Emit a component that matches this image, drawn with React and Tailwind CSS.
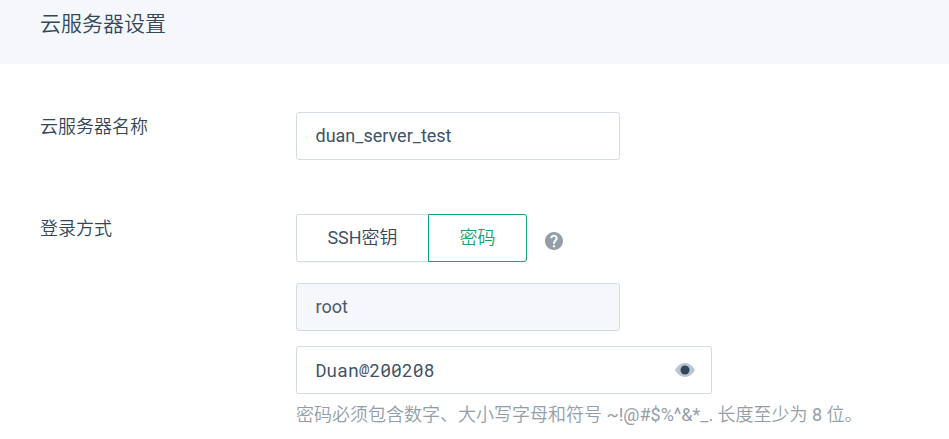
function HelpIcon() {
  return (
    <svg width="18" height="18" viewBox="2 2 20 20" aria-hidden="true" className="shrink-0 fill-[#939ea9]">
      <path d="M12 2C6.48 2 2 6.48 2 12s4.480 10 10 10 10-4.480 10-10S17.520 2 12 2zm1.200 17h-2.400v-2.300h2.400V19zm2.070-7.750-.9.920C13.600 12.900 13.200 13.500 13.200 15h-2.400v-.5c0-1.100.45-2.100 1.170-2.830l1.240-1.260c.37-.36.59-.86.59-1.410 0-1.100-.8-1.900-1.800-1.900s-1.900.8-1.900 1.900H7.900c0-2.210 1.890-4 4.100-4s4.100 1.790 4.100 4c0 .88-.26 1.680-.83 2.250z" />
    </svg>
  );
}

function EyeIcon() {
  return (
    <svg width="20" height="14" viewBox="0 0 20 14" aria-hidden="true" className="shrink-0">
      <path d="M0 7C2.300 3.200 5.600 0 10 0s7.700 3.200 10 7c-2.300 3.800-5.600 7-10 7S2.300 10.800 0 7z" fill="#b9c5d1" />
      <circle cx="10" cy="7" r="4.500" fill="#33475b" />
    </svg>
  );
}

function Row({ label, children }) {
  return (
    <div className="flex items-start pl-10">
      <div className="w-64 shrink-0 leading-[30px]">{label}</div>
      <div className="flex flex-col items-start">{children}</div>
    </div>
  );
}

export default function App() {
  return (
    <main className="h-[439px] w-full overflow-hidden bg-white font-[Roboto,'Noto_Sans_CJK_SC',sans-serif] text-[18px] text-[#33475b]">
      <header className="h-16 bg-[#f5f7fa] pl-10">
        <h2 className="text-[21px] leading-[49px] font-[350]">云服务器设置</h2>
      </header>
      <div className="flex flex-col gap-[54px] pt-12 font-[350]">
        <Row label="云服务器名称">
          <input
            className="h-12 w-[324px] rounded-[3px] border border-[#d3dce6] bg-white px-[18.5px] pb-0.5 font-[Roboto,sans-serif] font-normal text-[#3f5265] outline-none"
            defaultValue="duan_server_test"
          />
        </Row>
        <Row label="登录方式">
          <div className="flex items-center">
            <button className="h-12 w-[133px] rounded-l-[3px] border border-[#d3dce6] bg-white pb-0.5 shadow-[0_1px_1px_rgba(0,0,0,0.04)]"><span className="font-normal text-[#3f5265]">SSH</span>密钥</button>
            <button className="relative -ml-px h-12 w-[99px] rounded-r-[3px] border border-[#13a573] bg-white pb-0.5 text-[#13a573]">密码</button>
            <span className="ml-[17.5px] pt-[6px]"><HelpIcon /></span>
          </div>
          <input
            className="mt-[21px] h-12 w-[324px] rounded-[3px] border border-[#d3dce6] bg-[#f5f7fa] px-[18.5px] pb-0.5 font-[Roboto,sans-serif] font-normal text-[#4a5b6d] outline-none"
            value="root"
            readOnly
          />
          <div className="mt-[15px] flex h-12 w-[416px] items-center rounded-[3px] border border-[#d3dce6] pr-4 pl-[18.5px]">
            <input
              className="min-w-0 flex-1 bg-transparent font-['Roboto_Mono','DejaVu_Sans_Mono',monospace] text-[18px] font-normal text-[#3f5265] outline-none"
              defaultValue="Duan@200208"
            />
            <EyeIcon />
          </div>
          <p className="mt-[7px] leading-[28px] whitespace-nowrap text-[#939ea9]">
            密码必须包含数字、大小写字母和符号 <span className="font-normal">~!@#$%^&amp;*_.</span> 长度至少为 <span className="font-normal">8</span> 位。
          </p>
        </Row>
      </div>
    </main>
  );
}
